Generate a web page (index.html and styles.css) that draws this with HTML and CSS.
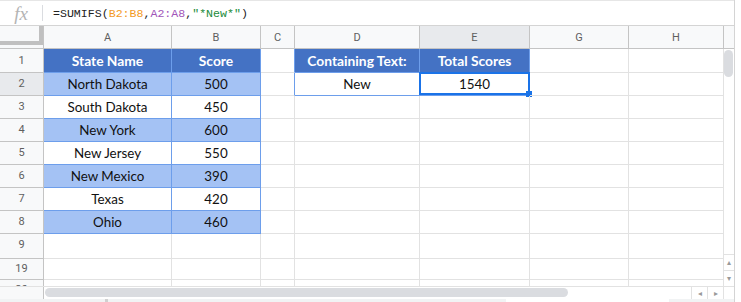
FILE: index.html
```html
<!DOCTYPE html>
<html lang="en">
<head>
    <meta charset="UTF-8">
    <title>SUMIFS Contains Text</title>
    <link rel="stylesheet" href="styles.css">
</head>
<body>
    <div class="sheet">
        <div class="formula-bar">
            <span class="fx">fx</span>
            <span class="fx-sep"></span>
            <span class="formula">=SUMIFS(<span class="ref-b">B2:B8</span>,<span class="ref-a">A2:A8</span>,<span class="str">"*New*"</span>)</span>
        </div>

        <div class="grid-area">
            <div class="grid">
                <!-- column headers -->
                <div class="c corner"><span class="freeze"></span></div>
                <div class="c ch">A</div>
                <div class="c ch">B</div>
                <div class="c ch">C</div>
                <div class="c ch">D</div>
                <div class="c ch active">E</div>
                <div class="c ch">G</div>
                <div class="c ch">H</div>

                <!-- row 1 -->
                <div class="c rh">1</div>
                <div class="c tb hd">State Name</div>
                <div class="c tb hd">Score</div>
                <div class="c edge"></div>
                <div class="c tb hd">Containing Text:</div>
                <div class="c tb hd">Total Scores</div>
                <div class="c"></div>
                <div class="c"></div>

                <!-- row 2 -->
                <div class="c rh active">2</div>
                <div class="c tb lt">North Dakota</div>
                <div class="c tb lt">500</div>
                <div class="c edge"></div>
                <div class="c tb">New</div>
                <div class="c tb sel">1540<span class="sel-box"><span class="handle"></span></span></div>
                <div class="c"></div>
                <div class="c"></div>

                <!-- row 3 -->
                <div class="c rh">3</div>
                <div class="c tb">South Dakota</div>
                <div class="c tb">450</div>
                <div class="c"></div>
                <div class="c"></div>
                <div class="c"></div>
                <div class="c"></div>
                <div class="c"></div>

                <!-- row 4 -->
                <div class="c rh">4</div>
                <div class="c tb lt">New York</div>
                <div class="c tb lt">600</div>
                <div class="c"></div>
                <div class="c"></div>
                <div class="c"></div>
                <div class="c"></div>
                <div class="c"></div>

                <!-- row 5 -->
                <div class="c rh">5</div>
                <div class="c tb">New Jersey</div>
                <div class="c tb">550</div>
                <div class="c"></div>
                <div class="c"></div>
                <div class="c"></div>
                <div class="c"></div>
                <div class="c"></div>

                <!-- row 6 -->
                <div class="c rh">6</div>
                <div class="c tb lt">New Mexico</div>
                <div class="c tb lt">390</div>
                <div class="c"></div>
                <div class="c"></div>
                <div class="c"></div>
                <div class="c"></div>
                <div class="c"></div>

                <!-- row 7 -->
                <div class="c rh">7</div>
                <div class="c tb">Texas</div>
                <div class="c tb">420</div>
                <div class="c"></div>
                <div class="c"></div>
                <div class="c"></div>
                <div class="c"></div>
                <div class="c"></div>

                <!-- row 8 -->
                <div class="c rh">8</div>
                <div class="c tb lt">Ohio</div>
                <div class="c tb lt">460</div>
                <div class="c"></div>
                <div class="c"></div>
                <div class="c"></div>
                <div class="c"></div>
                <div class="c"></div>

                <!-- row 9 -->
                <div class="c rh r9">9</div>
                <div class="c"></div>
                <div class="c"></div>
                <div class="c"></div>
                <div class="c"></div>
                <div class="c"></div>
                <div class="c"></div>
                <div class="c"></div>

                <!-- row 19 (10-18 hidden) -->
                <div class="c rh">19</div>
                <div class="c"></div>
                <div class="c"></div>
                <div class="c"></div>
                <div class="c"></div>
                <div class="c"></div>
                <div class="c"></div>
                <div class="c"></div>

                <!-- row 20, cut off -->
                <div class="c rh">20</div>
                <div class="c"></div>
                <div class="c"></div>
                <div class="c"></div>
                <div class="c"></div>
                <div class="c"></div>
                <div class="c"></div>
                <div class="c"></div>
            </div>

            <div class="vscroll">
                <div class="vscroll-head"></div>
                <div class="vscroll-track"><span class="vthumb"></span></div>
                <div class="sbtn">&#9652;</div>
                <div class="sbtn">&#9662;</div>
            </div>
        </div>

        <div class="hscroll">
            <div class="hscroll-left"></div>
            <div class="hscroll-track"><span class="hthumb"></span></div>
            <div class="sbtn">&#9666;</div>
            <div class="sbtn">&#9656;</div>
            <div class="hscroll-corner"></div>
        </div>

        <div class="tabs">
            <span class="tab-mark"></span>
            <span class="tab"></span>
        </div>
    </div>
</body>
</html>
```

FILE: styles.css
```css
* {
    margin: 0;
    padding: 0;
    box-sizing: border-box;
}

body {
    background-color: #ffffff;
    font-family: 'Roboto', sans-serif;
}

.sheet {
    width: 735px;
    height: 302px;
    border-right: 1px solid #d4d4d4;
    overflow: hidden;
}

/* formula bar */
.formula-bar {
    height: 26px;
    display: flex;
    align-items: center;
    border-top: 1px solid #e6e6e6;
    border-bottom: 1px solid #d4d4d4;
}

.fx {
    width: 42px;
    text-align: center;
    font-family: 'Liberation Serif', serif;
    font-style: italic;
    font-size: 19px;
    color: #b4b4b4;
    line-height: 1;
}

.fx-sep {
    width: 1px;
    height: 16px;
    background-color: #dadce0;
}

.formula {
    margin-left: 10px;
    font-family: 'Liberation Mono', monospace;
    font-size: 11.6px;
    color: #222;
    padding-top: 1px;
}

.ref-b {
    color: #f39a1e;
}

.ref-a {
    color: #a155b9;
}

.str {
    color: #1a8b3a;
}

/* grid */
.grid-area {
    display: flex;
    height: 260px;
    overflow: hidden;
}

.grid {
    display: grid;
    grid-template-columns: 44px 128px 89px 34px 125px 110px 99px 95px;
    grid-template-rows: 23px 24px repeat(7, 23px) 25px 21px 21px;
}

.c {
    border-right: 1px solid #e2e2e2;
    border-bottom: 1px solid #e2e2e2;
    display: flex;
    align-items: center;
    justify-content: center;
    font-family: 'Lato', sans-serif;
    font-size: 13.4px;
    color: #111;
    position: relative;
}

.ch,
.rh {
    background-color: #f8f9fa;
    border-color: #c4c4c4;
    font-family: 'Roboto', sans-serif;
    font-size: 11px;
    color: #5f5f5f;
}

.ch {
    padding-top: 1px;
}

.rh {
    padding-bottom: 1px;
}

.r9 {
    padding-bottom: 4px;
}

.active {
    background-color: #e8eaed;
}

.corner {
    background-color: #f8f9fa;
    border-color: #c4c4c4;
    align-items: flex-start;
    justify-content: flex-start;
}

.freeze {
    width: 43px;
    height: 19px;
    border-right: 4px solid #c0c0c0;
    border-bottom: 4px solid #c0c0c0;
}

/* data tables */
.tb {
    border-color: #6d9eeb;
}

.edge {
    border-right-color: #6d9eeb;
}

.hd {
    background-color: #4472c4;
    color: #ffffff;
    font-weight: bold;
    font-size: 13.8px;
}

.lt {
    background-color: #a4c2f4;
}

.sel-box {
    position: absolute;
    top: -1px;
    left: -1px;
    right: -1px;
    bottom: 0;
    border: 2px solid #1a73e8;
}

.handle {
    position: absolute;
    right: -4px;
    bottom: -4px;
    width: 6px;
    height: 6px;
    background-color: #1a73e8;
}

/* vertical scrollbar */
.vscroll {
    width: 10px;
    display: flex;
    flex-direction: column;
}

.vscroll-head {
    height: 23px;
    background-color: #f8f9fa;
    border-bottom: 1px solid #c4c4c4;
}

.vscroll-track {
    flex-grow: 1;
    padding-top: 1px;
}

.vthumb {
    display: block;
    width: 9px;
    height: 27px;
    border-radius: 5px;
    background-color: #dadce0;
}

.sbtn {
    height: 16px;
    border-top: 1px solid #e2e2e2;
    display: flex;
    align-items: center;
    justify-content: center;
    font-size: 8px;
    color: #9a9a9a;
}

/* horizontal scrollbar */
.hscroll {
    display: flex;
    height: 13px;
    border-top: 1px solid #e2e2e2;
}

.hscroll-left {
    width: 44px;
    background-color: #f8f9fa;
    border-right: 1px solid #c4c4c4;
}

.hscroll-track {
    width: 647px;
    padding: 1px 0 0 1px;
}

.hthumb {
    display: block;
    width: 523px;
    height: 9px;
    border-radius: 5px;
    background-color: #dadce0;
}

.hscroll .sbtn {
    width: 16px;
    height: 12px;
    border-top: none;
    border-left: 1px solid #e2e2e2;
}

.hscroll-corner {
    flex-grow: 1;
    border-left: 1px solid #e2e2e2;
}

/* sheet tabs */
.tabs {
    height: 4px;
    background-color: #f1f3f4;
    position: relative;
}

.tab {
    position: absolute;
    left: 506px;
    top: 0;
    width: 163px;
    height: 4px;
    background-color: #ffffff;
}

.tab-mark {
    position: absolute;
    left: 105px;
    top: 0;
    width: 3px;
    height: 4px;
    background-color: #d0d0d0;
}
```
